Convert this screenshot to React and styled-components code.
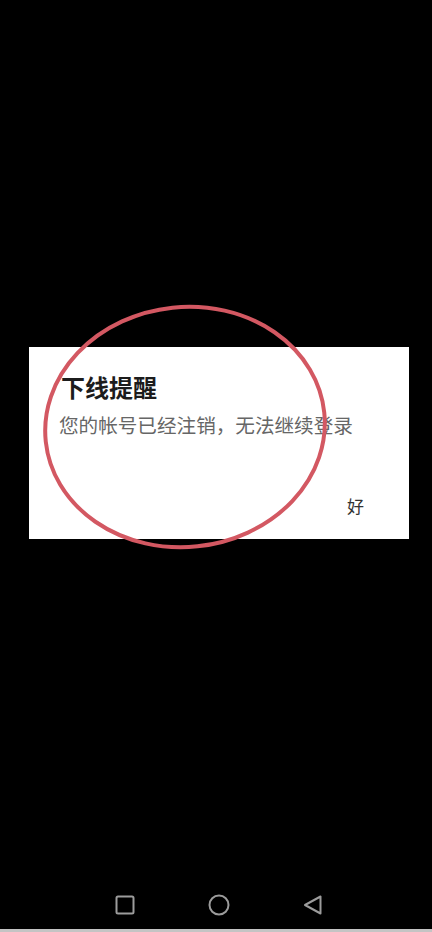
import styled, { createGlobalStyle } from "styled-components";

const GlobalStyle = createGlobalStyle`
  html, body {
    margin: 0;
    padding: 0;
    background: #000;
  }
  body {
    font-family: "Noto Sans CJK SC", "Noto Sans", sans-serif;
  }
`;

const Screen = styled.div`
  position: relative;
  width: 100vw;
  height: 100vh;
  background: #000;
  display: flex;
  flex-direction: column;
  overflow: hidden;
`;

const Main = styled.div`
  flex: 1;
  display: flex;
  align-items: center;
  justify-content: center;
  padding-top: 6px;
`;

const Dialog = styled.div`
  width: 380px;
  height: 192px;
  margin-left: 6px;
  background: #fff;
  box-sizing: border-box;
  padding: 24px 45px 0 32px;
  display: flex;
  flex-direction: column;
`;

const Title = styled.h2`
  margin: 0;
  font-size: 24px;
  line-height: 31px;
  font-weight: 700;
  color: #1c1c1c;
`;

const Message = styled.p`
  margin: 9px 0 0 -2px;
  font-size: 19.6px;
  line-height: 28px;
  color: #666;
  white-space: nowrap;
`;

const Actions = styled.div`
  margin-top: auto;
  margin-bottom: 22px;
  display: flex;
  justify-content: flex-end;
`;

const TextButton = styled.button`
  border: none;
  background: none;
  padding: 0;
  font-family: inherit;
  font-size: 17px;
  line-height: 22px;
  color: #333;
`;

const NavBar = styled.div`
  height: 49px;
  display: flex;
  align-items: center;
  justify-content: center;
  gap: 70px;
  padding-left: 6px;
  border-bottom: 3px solid #c4c4c4;
`;

const NavIcon = styled.svg`
  width: 24px;
  height: 24px;
  fill: none;
  stroke: #9c9c9c;
  stroke-width: 2;
  stroke-linejoin: round;
`;

const Annotation = styled.svg`
  position: absolute;
  left: 0;
  top: 0;
  width: 432px;
  height: 932px;
  pointer-events: none;
`;

const App = () => {
  return (
    <>
      <GlobalStyle />
      <Screen>
        <Main>
          <Dialog>
            <Title>下线提醒</Title>
            <Message>您的帐号已经注销，无法继续登录</Message>
            <Actions>
              <TextButton>好</TextButton>
            </Actions>
          </Dialog>
        </Main>
        <NavBar>
          <NavIcon viewBox="0 0 24 24">
            <rect x="3.5" y="3.5" width="17" height="17" rx="1.5" />
          </NavIcon>
          <NavIcon viewBox="0 0 24 24">
            <circle cx="12" cy="12" r="9.5" />
          </NavIcon>
          <NavIcon viewBox="0 0 24 24">
            <path d="M4 12 L19.5 3.5 L19.5 20.5 Z" />
          </NavIcon>
        </NavBar>
        <Annotation viewBox="0 0 432 932">
          <ellipse
            cx="185"
            cy="427"
            rx="140"
            ry="120"
            transform="rotate(-6 185 427)"
            fill="none"
            stroke="#d35862"
            strokeWidth="4"
          />
        </Annotation>
      </Screen>
    </>
  );
};

export default App;
